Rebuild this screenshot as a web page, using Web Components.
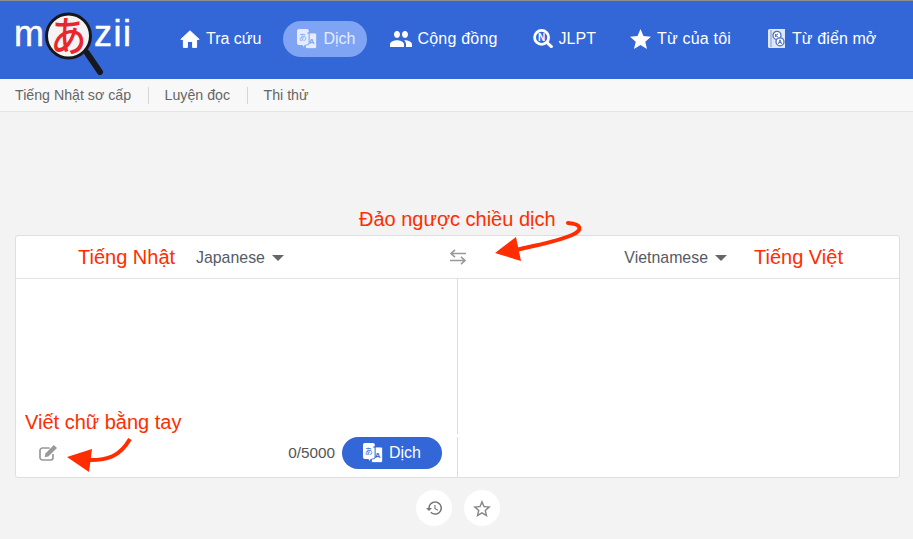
<!DOCTYPE html>
<html lang="vi">
<head>
<meta charset="utf-8">
<title>Mazii</title>
<style>
	html, body {
		margin: 0;
		height: 100%;
		overflow: hidden;
	}

	body {
		position: relative;
		background: #f3f3f3;
		font-family: "Liberation Sans", Arial, sans-serif;
		border-top: 1px solid #8f8f8f;
		box-sizing: border-box;
	}
</style>
</head>
<body>
<moz-navbar>
	<moz-logo></moz-logo>
	<nav-item icon="home" style="margin-left:13px">Tra cứu</nav-item>
	<nav-item icon="translate" active>Dịch</nav-item>
	<nav-item icon="people" style="margin-left:-1px;--gap:5px;letter-spacing:.2px">Cộng đồng</nav-item>
	<nav-item icon="jlpt" style="margin-left:-1px">JLPT</nav-item>
	<nav-item icon="star" style="margin-left:-2px;letter-spacing:.2px">Từ của tôi</nav-item>
	<nav-item icon="dict" style="margin-left:1px;--gap:7px;letter-spacing:.1px">Từ điển mở</nav-item>
</moz-navbar>
<moz-subnav>
	<a>Tiếng Nhật sơ cấp</a>
	<a>Luyện đọc</a>
	<a>Thi thử</a>
</moz-subnav>
<translate-card></translate-card>
<round-actions></round-actions>

<moz-note x="359" y="206">Đảo ngược chiều dịch</moz-note>
<moz-note x="78" y="244">Tiếng Nhật</moz-note>
<moz-note x="754" y="244">Tiếng Việt</moz-note>
<moz-note x="25" y="409">Viết chữ bằng tay</moz-note>
<note-arrows></note-arrows>

<script>
const ICONS = {
	home: `<svg width="20" height="18" viewBox="0 0 20 18"><path fill="currentColor" stroke="currentColor" stroke-width="1" stroke-linejoin="round" d="M10 .8 19.2 9.4H16.6V17.4H12.6V11.4H7.4V17.4H3.4V9.4H.8z"/></svg>`,
	translate: `<svg width="20" height="20" viewBox="0 0 20 20"><path fill="currentColor" d="M1.8 0H10a1.8 1.8 0 0 1 1.8 1.8V14.2A1.8 1.8 0 0 1 10 16H7.6L6.8 18 5.4 16H1.8A1.8 1.8 0 0 1 0 14.2V1.8A1.8 1.8 0 0 1 1.8 0z"/><path fill="currentColor" stroke="var(--icon-back)" stroke-width=".8" d="M10.4 4H18a1.6 1.6 0 0 1 1.6 1.6V18A1.6 1.6 0 0 1 18 19.6H10A1.6 1.6 0 0 1 8.4 18V16H10A2.2 2.2 0 0 0 12.2 14V4z"/><text x="5.8" y="11" text-anchor="middle" font-size="8" fill="var(--icon-back)" font-family="Noto Sans CJK JP">あ</text><text x="14.6" y="15" text-anchor="middle" font-size="8" font-weight="700" fill="var(--icon-back)" font-family="Liberation Sans">A</text></svg>`,
	people: `<svg width="22" height="16" viewBox="1 5 22 14" preserveAspectRatio="none"><path fill="currentColor" d="M16 11c1.66 0 2.99-1.34 2.99-3S17.66 5 16 5c-1.66 0-3 1.34-3 3s1.34 3 3 3zm-8 0c1.66 0 2.99-1.34 2.99-3S9.66 5 8 5C6.34 5 5 6.34 5 8s1.34 3 3 3zm0 2c-2.33 0-7 1.17-7 3.5V19h14v-2.5c0-2.33-4.67-3.5-7-3.5zm8 0c-.29 0-.62.02-.97.05 1.16.84 1.97 1.97 1.97 3.45V19h6v-2.5c0-2.33-4.67-3.5-7-3.5z"/></svg>`,
	jlpt: `<svg width="20" height="19" viewBox="0 0 20 19"><circle cx="8.6" cy="8.4" r="7" fill="none" stroke="currentColor" stroke-width="2.8"/><path stroke="currentColor" stroke-width="3" stroke-linecap="round" d="M14 13.6 18.4 17.6"/><text x="8.6" y="12" text-anchor="middle" font-size="10" font-weight="700" fill="currentColor" font-family="Liberation Sans">N</text></svg>`,
	star: `<svg width="21" height="20" viewBox="2 2 20 19"><path fill="currentColor" d="M12 17.27L18.18 21l-1.64-6.99L22 9.24l-7.19-.61L12 2 9.19 8.63 2 9.24l5.46 4.77L5.82 21z"/></svg>`,
	dict: `<svg width="17" height="19" viewBox="0 0 17 19"><path fill="#dfe6f6" d="M1.5 0H17V19H1.5A1.5 1.5 0 0 1 0 17.5V1.5A1.5 1.5 0 0 1 1.5 0z"/><path fill="#8fa6dc" d="M2.4 1H3.6V18H2.4z"/><circle cx="9" cy="6.4" r="4" fill="#fff" stroke="#4a6fc4" stroke-width="1.3"/><circle cx="12" cy="12.8" r="4" fill="#fff" stroke="#4a6fc4" stroke-width="1.3"/><path fill="none" stroke="#4a6fc4" stroke-width="1" d="M7.6 8V5M7.6 6.6 10 4.8M7.6 6.6 10.2 8.2M10.4 15 12 10.8 13.6 15M11 13.6H13"/></svg>`
};

class MozNavbar extends HTMLElement {
	constructor() {
		super();
		this.attachShadow({ mode: 'open' });
		this.shadowRoot.innerHTML = `
<style>
	:host {
		display: flex;
		align-items: center;
		column-gap: 10px;
		height: 78px;
		padding: 0 0 3px 14px;
		box-sizing: border-box;
		background: #3366d6;
	}
</style>
<slot></slot>`;
	}
}

class MozLogo extends HTMLElement {
	constructor() {
		super();
		this.attachShadow({ mode: 'open' });
		this.shadowRoot.innerHTML = `
<style>
	:host {
		display: flex;
		position: relative;
		align-items: baseline;
		width: 129px;
		height: 40px;
		margin-bottom: 9px;
		font-size: 36px;
		line-height: 40px;
		color: #fff;
		font-family: "Liberation Sans", sans-serif;
		-webkit-text-stroke: .5px #fff;
	}
	.glass {
		position: absolute;
		left: 28px;
		top: -6px;
		width: 64px;
		height: 70px;
		-webkit-text-stroke: 0;
		overflow: visible;
	}
	.zii {
		margin-left: 50px;
		letter-spacing: 1.5px;
	}
</style>
<span>m</span><span class="zii">zii</span>
<svg class="glass" viewBox="0 0 64 70">
	<path d="M45 45 58 64" stroke="#17181c" stroke-width="6" stroke-linecap="round"/>
	<circle cx="26.5" cy="28" r="22" fill="#f4f4f4" stroke="#17181c" stroke-width="3"/>
	<text transform="translate(26.5 43) scale(.92 1.06)" text-anchor="middle" font-size="39" font-weight="500" fill="#e8262c" font-family="Noto Sans CJK JP">あ</text>
</svg>`;
	}
}

class NavItem extends HTMLElement {
	constructor() {
		super();
		this.attachShadow({ mode: 'open' });
		this.shadowRoot.innerHTML = `
<style>
	:host {
		display: flex;
		align-items: center;
		column-gap: var(--gap, 6px);
		height: 36px;
		padding: 0 12px 0 14px;
		border-radius: 18px;
		color: #fff;
		font-size: 16px;
		white-space: nowrap;
		--icon-back: #3366d6;
	}
	:host([active]) {
		background: #7fa4f3;
		color: #e4ecfd;
		--icon-back: #7fa4f3;
	}
	svg {
		display: block;
	}
</style>
${ICONS[this.getAttribute('icon')]}<slot></slot>`;
	}
}

class MozSubnav extends HTMLElement {
	constructor() {
		super();
		this.attachShadow({ mode: 'open' });
		this.shadowRoot.innerHTML = `
<style>
	:host {
		display: flex;
		align-items: center;
		height: 33px;
		padding-left: 15px;
		box-sizing: border-box;
		background: #f8f8f8;
		border-bottom: 1px solid #e4e4e4;
		color: #666;
		font-size: 14.2px;
	}
	::slotted(a) {
		padding-right: 16.5px;
		margin-right: 16px;
		border-right: 1px solid #d6d6d6;
		line-height: 17px;
	}
	::slotted(a:last-child) {
		border-right: 0;
	}
</style>
<slot></slot>`;
	}
}

class LangPicker extends HTMLElement {
	constructor() {
		super();
		this.attachShadow({ mode: 'open' });
		this.shadowRoot.innerHTML = `
<style>
	:host {
		display: flex;
		align-items: center;
		column-gap: 7px;
		padding-top: 2px;
		color: #555b66;
		font-size: 15.9px;
	}
	i {
		width: 0;
		height: 0;
		border: 6px solid transparent;
		border-top-color: #666;
		border-bottom: 0;
	}
</style>
<slot></slot><i></i>`;
	}
}

class TranslateCard extends HTMLElement {
	constructor() {
		super();
		this.attachShadow({ mode: 'open' });
		this.shadowRoot.innerHTML = `
<style>
	:host {
		display: grid;
		grid-template-columns: 442px 1fr;
		grid-template-rows: 43px 1fr;
		width: 885px;
		height: 243px;
		margin: 123px 0 0 15px;
		box-sizing: border-box;
		background: #fff;
		border: 1px solid #dfdfdf;
		border-radius: 3px;
	}
	.head {
		grid-column: 1 / 3;
		display: flex;
		justify-content: space-between;
		align-items: center;
		padding: 0 172px 0 180px;
		border-bottom: 1px solid #e2e2e2;
	}
	.swap {
		display: block;
		margin-left: 8px;
	}
	.left {
		display: flex;
		flex-direction: column;
		justify-content: flex-end;
		position: relative;
		border-right: 1px solid #dcdcdc;
	}
	.left::after {
		content: "";
		position: absolute;
		right: -1px;
		bottom: 40px;
		width: 1px;
		height: 3px;
		background: #fff;
	}
	.tools {
		display: flex;
		align-items: center;
		column-gap: 7px;
		height: 32px;
		padding: 0 15px 8px 23px;
		color: #555;
		font-size: 15.3px;
	}
	.edit {
		display: block;
		margin-right: auto;
	}
	button {
		display: flex;
		align-items: center;
		justify-content: center;
		column-gap: 6px;
		width: 100px;
		height: 32px;
		padding: 0;
		border: 0;
		border-radius: 16px;
		background: #3366d6;
		color: #fff;
		font: 16px "Liberation Sans", sans-serif;
		--icon-back: #3366d6;
	}
</style>
<div class="head">
	<lang-picker>Japanese</lang-picker>
	<svg class="swap" width="18" height="16" viewBox="0 0 18 16" fill="none" stroke="#999" stroke-width="1.6"><path d="M17 4.5H2M6 .8 2 4.5 6 8.2M1 11.5H16M12 7.8 16 11.5 12 15.2"/></svg>
	<lang-picker>Vietnamese</lang-picker>
</div>
<div class="left">
	<div class="tools">
		<svg class="edit" width="18" height="16" viewBox="0 0 18 16"><path fill="none" stroke="#999" stroke-width="1.7" stroke-linecap="round" d="M14 9.5V12.5A2.5 2.5 0 0 1 11.5 15H3.5A2.5 2.5 0 0 1 1 12.5V5.5A2.5 2.5 0 0 1 3.5 3H10"/><path fill="#999" d="M14.8 0 18 3.1 9.3 11.5 5.8 12.3 6.4 8.6z"/></svg>
		<span>0/5000</span>
		<button>${ICONS.translate}Dịch</button>
	</div>
</div>
<div></div>`;
	}
}

class RoundActions extends HTMLElement {
	constructor() {
		super();
		this.attachShadow({ mode: 'open' });
		this.shadowRoot.innerHTML = `
<style>
	:host {
		display: flex;
		justify-content: center;
		column-gap: 12px;
		margin: 12px 0 0 3px;
	}
	span {
		display: flex;
		align-items: center;
		justify-content: center;
		width: 36px;
		height: 36px;
		border-radius: 50%;
		background: #fff;
	}
</style>
<span><svg width="16" height="14" viewBox="1 3 21 18"><path fill="#777" d="M13 3c-4.97 0-9 4.03-9 9H1l3.89 3.89.07.14L9 12H6c0-3.87 3.13-7 7-7s7 3.13 7 7-3.13 7-7 7c-1.93 0-3.68-.79-4.94-2.06l-1.42 1.42C8.27 19.99 10.51 21 13 21c4.97 0 9-4.03 9-9s-4.03-9-9-9zm-1 5v5l4.28 2.54.72-1.21-3.5-2.08V8H12z"/></svg></span>
<span><svg width="18" height="17" viewBox="2 2 20 19"><path fill="#888" d="M22 9.24l-7.19-.62L12 2 9.19 8.63 2 9.24l5.46 4.73L5.82 21 12 17.27 18.18 21l-1.63-7.03L22 9.24zM12 15.4l-3.76 2.27 1-4.28-3.32-2.88 4.38-.38L12 6.1l1.71 4.04 4.38.38-3.32 2.88 1 4.28L12 15.4z"/></svg></span>`;
	}
}

// red notes drawn on top of the screenshot
class MozNote extends HTMLElement {
	constructor() {
		super();
		this.attachShadow({ mode: 'open' });
		this.shadowRoot.innerHTML = `
<style>
	:host {
		position: absolute;
		left: ${this.getAttribute('x')}px;
		top: ${this.getAttribute('y')}px;
		color: #ff2d00;
		font-size: 20px;
		line-height: 24px;
		white-space: nowrap;
	}
</style>
<slot></slot>`;
	}
}

class NoteArrows extends HTMLElement {
	constructor() {
		super();
		this.attachShadow({ mode: 'open' });
		this.shadowRoot.innerHTML = `
<style>
	:host {
		position: absolute;
		left: 0;
		top: -1px;
		pointer-events: none;
	}
	svg {
		display: block;
	}
</style>
<svg width="913" height="539">
	<path fill="none" stroke="#ff2d00" stroke-width="4" stroke-linecap="round" d="M568 223C582 224 583 230 572 235 556 242 536 245 516 250"/>
	<path fill="#ff2d00" d="M495 253 516 237 521 261z"/>
	<path fill="none" stroke="#ff2d00" stroke-width="4" d="M130 439C120 456 108 461 86 460"/>
	<path fill="#ff2d00" d="M67 457 92 449 89 472z"/>
</svg>`;
	}
}

window.customElements.define('moz-navbar', MozNavbar);
window.customElements.define('moz-logo', MozLogo);
window.customElements.define('nav-item', NavItem);
window.customElements.define('moz-subnav', MozSubnav);
window.customElements.define('lang-picker', LangPicker);
window.customElements.define('translate-card', TranslateCard);
window.customElements.define('round-actions', RoundActions);
window.customElements.define('moz-note', MozNote);
window.customElements.define('note-arrows', NoteArrows);
</script>
</body>
</html>
